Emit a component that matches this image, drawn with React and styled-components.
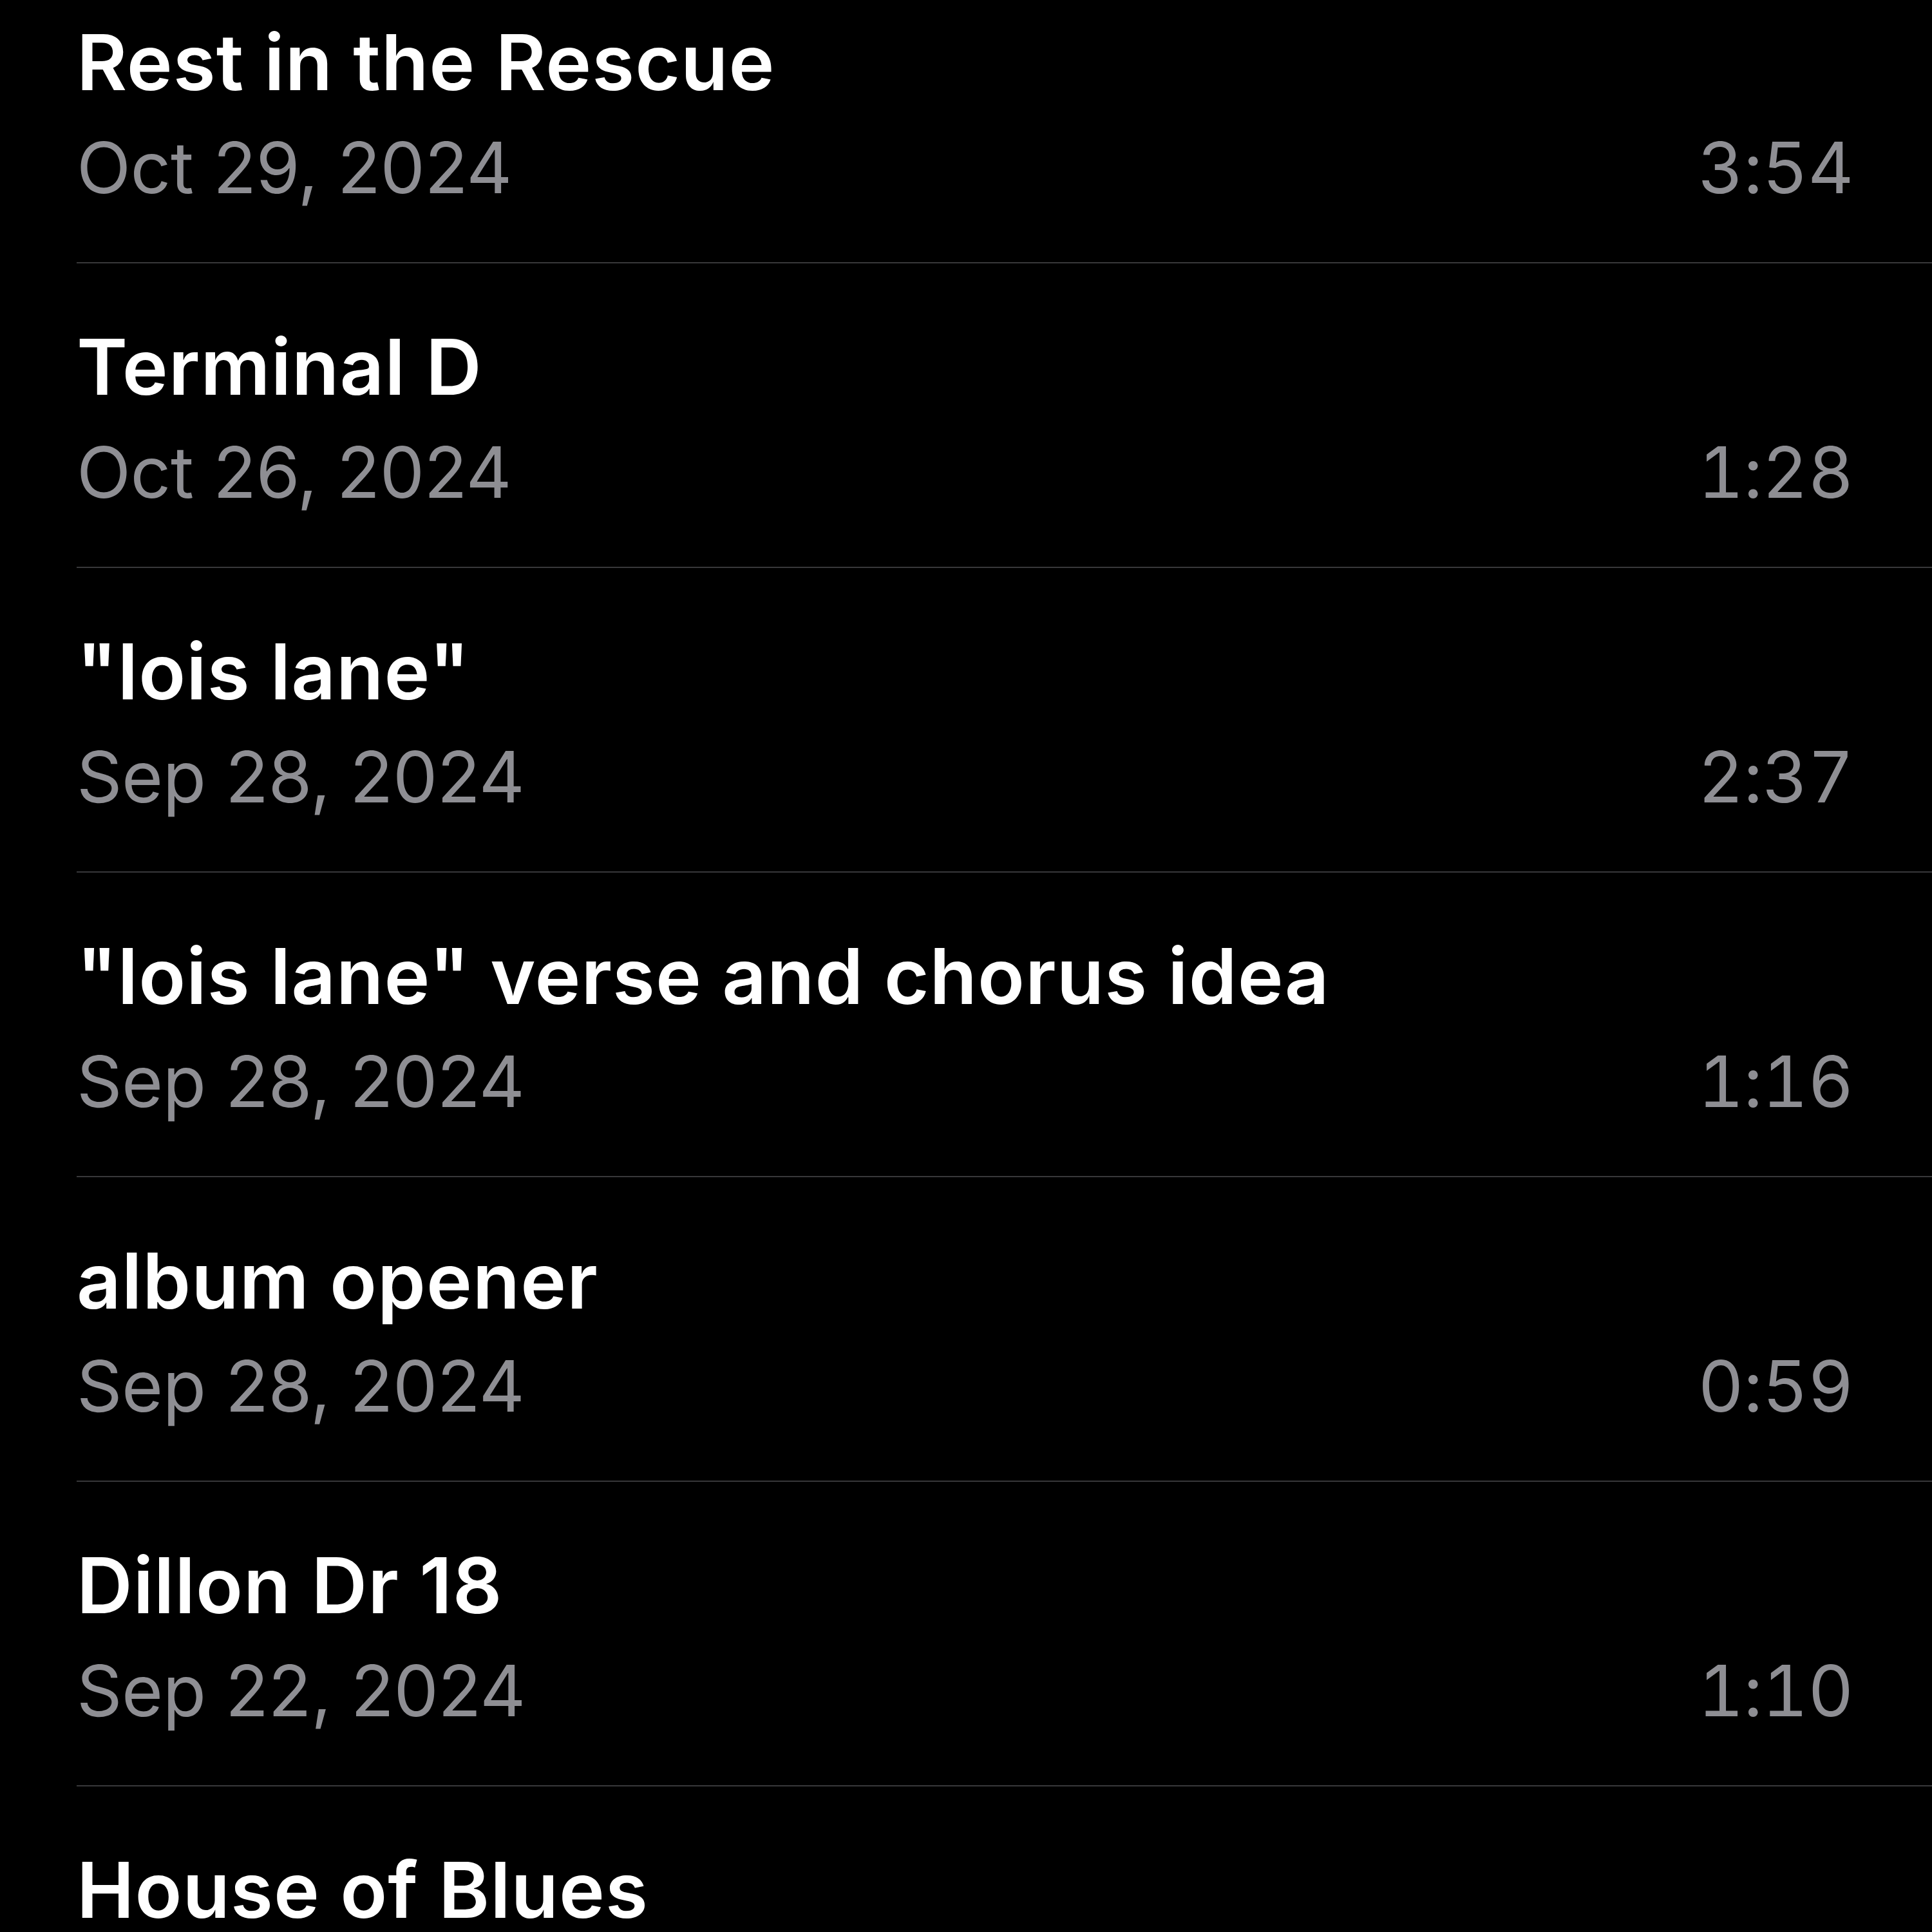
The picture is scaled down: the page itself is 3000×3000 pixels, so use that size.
import React from 'react'
import styled, { createGlobalStyle } from 'styled-components'

const GlobalStyle = createGlobalStyle`
  html, body {
    margin: 0;
    padding: 0;
    background: #000;
  }
  body {
    font-family: Inter, "Noto Sans", "Liberation Sans", sans-serif;
    -webkit-font-smoothing: antialiased;
  }
`

const Screen = styled.div`
  width: 3000px;
  height: 3000px;
  overflow: hidden;
  background: #000;
`

const List = styled.ul`
  list-style: none;
  margin: -64px 0 0 119px;
  padding: 0;
`

const Row = styled.li`
  display: flex;
  flex-direction: column;
  gap: 25px;
  padding: 89px 122px 81px 0;
  border-bottom: 2px solid #38383a;
`

const Title = styled.div`
  color: #fff;
  font-size: 120px;
  line-height: 144px;
  font-weight: 600;
  letter-spacing: 1px;
  white-space: nowrap;
`

const Meta = styled.div`
  display: flex;
  justify-content: space-between;
  align-items: baseline;
  color: #8e8e93;
  font-size: 110px;
  line-height: 132px;
  font-weight: 400;
  letter-spacing: -0.5px;
`

const Duration = styled.span`
  font-variant-numeric: tabular-nums;
`

const memos = [
  { title: 'Rest in the Rescue', date: 'Oct 29, 2024', length: '3:54' },
  { title: 'Terminal D', date: 'Oct 26, 2024', length: '1:28' },
  { title: '"lois lane"', date: 'Sep 28, 2024', length: '2:37' },
  { title: '"lois lane" verse and chorus idea', date: 'Sep 28, 2024', length: '1:16' },
  { title: 'album opener', date: 'Sep 28, 2024', length: '0:59' },
  { title: 'Dillon Dr 18', date: 'Sep 22, 2024', length: '1:10' },
  { title: 'House of Blues', date: '', length: '' },
]

const App = () => (
  <Screen>
    <GlobalStyle />
    <List>
      {memos.map((m, i) => (
        <Row key={i}>
          <Title>{m.title}</Title>
          <Meta>
            <span>{m.date}</span>
            <Duration>{m.length}</Duration>
          </Meta>
        </Row>
      ))}
    </List>
  </Screen>
)

export default App
